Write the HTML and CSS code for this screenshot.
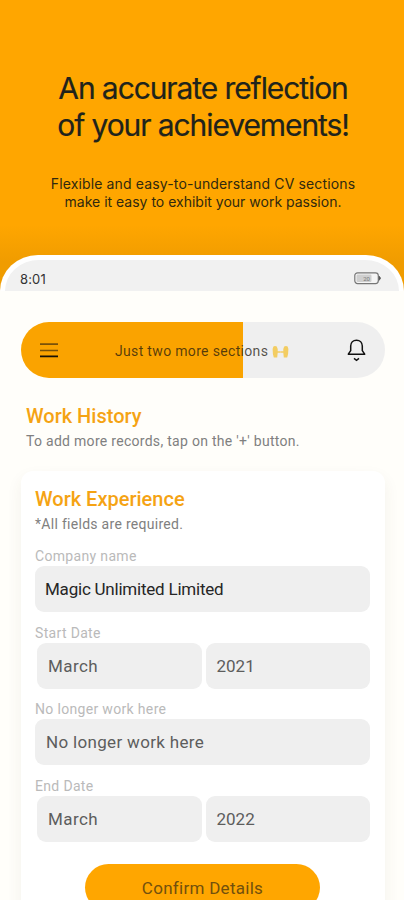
FILE: index.html
```html
<!DOCTYPE html>
<html lang="en">
<head>
<meta charset="utf-8">
<title>Work History</title>
<link rel="stylesheet" href="styles.css">
</head>
<body>
<header class="promo">
  <h1 class="headline">An accurate reflection<br>of your achievements!</h1>
  <p class="tagline"><span class="wide">Flexible and easy-to-understand CV sections</span><br>make it easy to exhibit your work passion.</p>
</header>
<main class="phone">
  <div class="status">
    <span class="time">8:01</span>
    <svg class="battery" width="27" height="13" viewBox="0 0 27 13">
      <rect x=".8" y=".8" width="23.5" height="10.8" rx="2.8" fill="#f5f5f5" stroke="#777" stroke-width="1.2"/>
      <rect x="2.5" y="2.5" width="15" height="7.4" rx="1.2" fill="#cfcfcf"/>
      <path d="M25 4v4.4l1.8-2.2z" fill="#555" stroke="#555" stroke-width=".6"/>
      <text x="12.5" y="8.8" text-anchor="middle" class="charge">20</text>
    </svg>
  </div>
  <nav class="progress">
    <svg class="menu" width="18" height="15" viewBox="0 0 18 15" fill="none">
      <path d="M0 1.2h18M0 7.5h18" stroke="#7a5208" stroke-width="1.7"/>
      <path d="M0 13.4h18" stroke="#171207" stroke-width="1.9"/>
    </svg>
    <span class="message">Just two more sections</span>
    <svg class="hands" width="17" height="14" viewBox="0 0 17 14">
      <path d="M.6 4 1.4 1.5 3 .9 4.8 1.6 5.7 4v2.2h2.8v1.6H5.7L5.2 12.6H1.8L.9 9z" fill="#f3cd62"/>
      <path d="M16.4 4 15.6 1.5 14 .9l-1.8.7-.9 2.4v2.2H8.5v1.6h2.8l.5 4.8h3.4l.9-3.6z" fill="#f3cd62"/>
    </svg>
    <svg class="bell" width="19" height="23" viewBox="0 0 19 23" fill="none" stroke="#111" stroke-width="1.5">
      <path d="M1.3 15.2h16.4l-2.4-3.5V7.1c0-3.5-2.5-5.9-5.8-5.9S3.7 3.6 3.7 7.1v4.6z" stroke-linejoin="round"/>
      <path d="m7 19.4 2.5 1.9 2.5-1.9"/>
    </svg>
  </nav>
  <section class="intro">
    <h2 class="history">Work History</h2>
    <p class="hint">To add more records, tap on the '+' button.</p>
  </section>
  <form class="card">
    <h2 class="experience">Work Experience</h2>
    <p class="required">*All fields are required.</p>
    <div class="group first">
      <div class="label">Company name</div>
      <div class="field company">Magic Unlimited Limited</div>
    </div>
    <div class="group">
      <div class="label">Start Date</div>
      <div class="pair"><div class="field">March</div><div class="field year">2021</div></div>
    </div>
    <div class="group">
      <div class="label">No longer work here</div>
      <div class="field here">No longer work here</div>
    </div>
    <div class="group">
      <div class="label">End Date</div>
      <div class="pair"><div class="field">March</div><div class="field year">2022</div></div>
    </div>
    <div class="confirm">Confirm Details</div>
  </form>
</main>
</body>
</html>
```
FILE: styles.css
```css
* { box-sizing: border-box; }
body { margin: 0; height: 900px; overflow: hidden; background: #ffa600 linear-gradient(#ffa600 225px, #f09c00 262px); font-family: Roboto, sans-serif; }
h1, h2, p { margin: 0; font-weight: 400; white-space: nowrap; }
.promo { height: 255px; padding-top: 70px; text-align: center; font-family: Inter, sans-serif; color: #20231c; }
.headline { font-size: 30px; line-height: 37px; letter-spacing: -1.09px; padding-left: 2px; -webkit-text-stroke: .2px #20231c; }
.tagline { margin-top: 31px; font-size: 14px; line-height: 18px; padding-left: 2px; color: #30290f; }
.wide { letter-spacing: .14px; }
.phone { height: 645px; background: linear-gradient(#fff 36px, #fffefa 36px); border-radius: 38px 38px 0 0 / 36px 36px 0 0; overflow: hidden; }
.status { margin: 5px 5px 0; height: 31px; padding: 5px 18px 0 15px; display: flex; align-items: center; justify-content: space-between; background: #f1f1f1; border-radius: 34px 34px 0 0 / 31px 31px 0 0; }
.time { font: 13px/16px Inter, sans-serif; letter-spacing: .15px; padding-top: 1px; color: #333; }
.battery { margin-top: 1px; }
.charge { font: 6px Roboto, sans-serif; fill: #777; }
.progress { margin: 31px 19px 0 21px; height: 56px; padding: 0 19px 0 19px; display: flex; align-items: center; border-radius: 28px; background: linear-gradient(90deg, #faa300 222px, #efefef 222px); }
.message { margin-left: 57px; font-size: 14px; line-height: 20px; letter-spacing: .33px; padding-top: 2px; color: rgba(30, 25, 15, .75); white-space: nowrap; }
.hands { margin: 4px 0 0 4px; }
.bell { margin-left: auto; }
.intro { padding: 26px 0 0 26px; }
.history, .experience { font-size: 20px; line-height: 24px; font-weight: 500; color: #f5a313; }
.hint, .required { margin-top: 4px; font-size: 14px; line-height: 18px; letter-spacing: .29px; color: #808080; }
.card { margin: 21px 19px 0 21px; height: 500px; padding: 16px 15px 0 14px; border-radius: 12px; background: #fff; box-shadow: 0 7px 16px rgba(90, 75, 40, .07); }
.group { height: 61.6px; margin-top: 15px; }
.first { margin-top: 14px; }
.label { padding-top: 1px; font-size: 14px; line-height: 17px; letter-spacing: .33px; color: #bababa; white-space: nowrap; }
.field { height: 46px; margin-top: 1px; padding: 0 10px; display: flex; align-items: center; flex: 1; border-radius: 9px; background: #efefef; font-size: 17px; letter-spacing: .4px; color: #5d5d5d; white-space: nowrap; }
.company { letter-spacing: -.22px; color: #262626; }
.here { padding-left: 11px; letter-spacing: .33px; }
.pair { display: flex; gap: 4px; padding-left: 2px; }
.pair .field { padding-left: 11px; }
.pair .year { letter-spacing: 0; }
.confirm { width: 235px; height: 47px; margin: 26px auto 0 50px; display: flex; align-items: center; justify-content: center; border-radius: 24px; background: #ffa600; font-size: 17px; letter-spacing: .28px; color: #72500d; }
```
